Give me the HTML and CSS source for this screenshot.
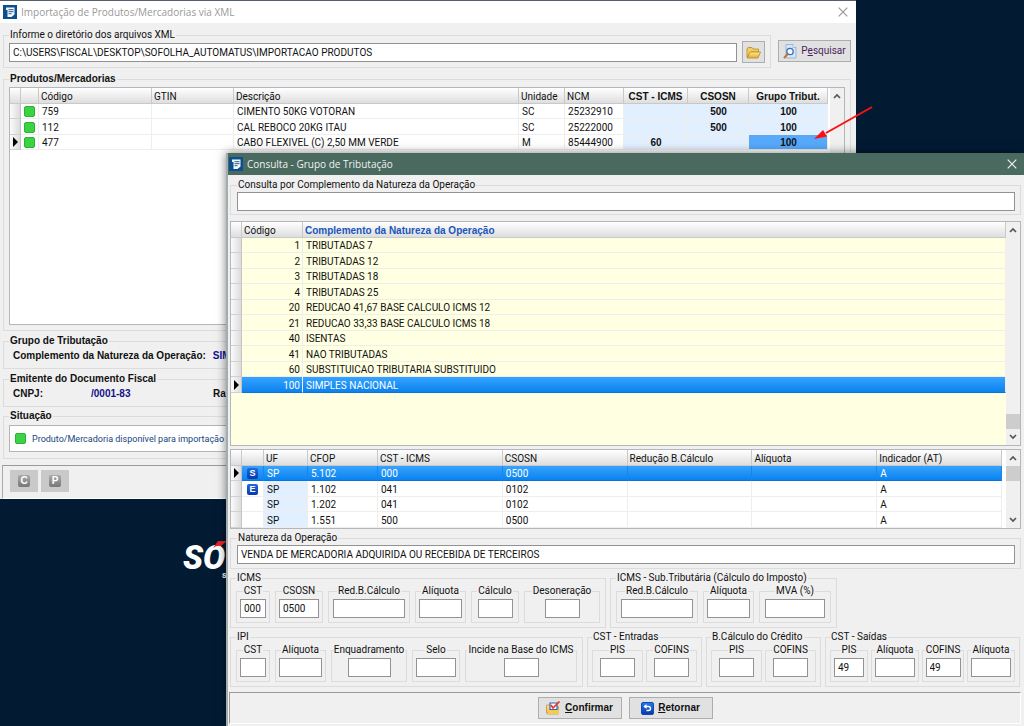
FILE: index.html
```html
<!DOCTYPE html>
<html lang="pt-BR">
<head>
<meta charset="utf-8">
<title>Consulta - Grupo de Tributação</title>
<link rel="stylesheet" href="styles.css">
</head>
<body>
<svg class="defs" width="0" height="0" aria-hidden="true">
  <defs>
    <linearGradient id="blue" x1="0" y1="0" x2="0" y2="1"><stop offset="0" stop-color="#2a7be8"/><stop offset="1" stop-color="#0636a8"/></linearGradient>
    <linearGradient id="gold" x1="0" y1="0" x2="0" y2="1"><stop offset="0" stop-color="#ffe99a"/><stop offset="1" stop-color="#e3a92a"/></linearGradient>
    <symbol id="app" viewBox="0 0 14 14"><rect width="14" height="14" fill="#0b4f8c"/><path d="M3 2.500h8.500v7L8.500 12H4.500V5H3z" fill="#f4f8fb"/><path d="M5.500 4.700h5M5.500 6.700h5M5.500 8.700h3" stroke="#0b4f8c" stroke-width=".9"/></symbol>
    <symbol id="x" viewBox="0 0 10 10"><path d="M.7.7l8.600 8.600M9.300.7L.7 9.300" fill="none" stroke="currentColor" stroke-width="1.200"/></symbol>
    <symbol id="up" viewBox="0 0 8 6"><path d="M1 5l3-3 3 3" fill="none" stroke="#555" stroke-width="1.700"/></symbol>
    <symbol id="down" viewBox="0 0 8 6"><path d="M1 1l3 3 3-3" fill="none" stroke="#555" stroke-width="1.700"/></symbol>
  </defs>
</svg>
<main class="desktop">
  <div class="logo">SO<small>s</small>
    <svg class="accent" width="14" height="7" viewBox="0 0 14 7"><path d="M5 0H14L8 5Q4 4 0 7Z" fill="#e52428"/></svg>
  </div>

  <section class="window import">
    <header class="titlebar">
      <svg class="app" width="14" height="14"><use href="#app"/></svg>
      <h1>Importação de Produtos/Mercadorias via XML</h1>
      <button class="close" aria-label="Fechar"><svg width="10" height="10"><use href="#x"/></svg></button>
    </header>
    <div class="import-body">
      <div class="search-row">
        <fieldset class="group dir">
          <legend><label for="dir">Informe o diretório dos arquivos XML</label></legend>
          <div class="dir-line">
            <input id="dir" class="field" value="C:\USERS\FISCAL\DESKTOP\SOFOLHA_AUTOMATUS\IMPORTACAO PRODUTOS">
            <button class="btn folder" aria-label="Abrir pasta"><svg width="15" height="13" viewBox="0 0 15 13"><path d="M1 11V3l1-1.500h4l1 1.500h5.500V6H5z" fill="#f2cd5d" stroke="#b68a24" stroke-width=".8"/><path d="M1.200 12L4 6h10.500L12 12z" fill="url(#gold)" stroke="#b68a24" stroke-width=".8"/></svg></button>
          </div>
        </fieldset>
        <button class="btn search"><svg width="14" height="15" viewBox="0 0 14 15"><path d="M3 .5h7l3 3V14H3z" fill="#d5e6f7" stroke="#8aaed2" stroke-width=".8"/><path d="M10 .5v3h3" fill="#fff" stroke="#8aaed2" stroke-width=".8"/><circle cx="7" cy="7.500" r="3.200" fill="#eef7ff" stroke="#3c70ae" stroke-width="1.300"/><path d="M4.700 10L1 14" stroke="#c87323" stroke-width="2"/></svg><span>P<u>e</u>squisar</span></button>
      </div>

      <fieldset class="group strong products">
        <legend>Produtos/Mercadorias</legend>
        <div class="grid">
          <div class="sheet">
            <table>
              <colgroup><col class="c-mark"><col class="c-dot"><col class="c-code"><col class="c-gtin"><col><col class="c-unit"><col class="c-ncm"><col class="c-cst"><col class="c-csosn"><col class="c-group"></colgroup>
              <thead><tr><th></th><th></th><th>Código</th><th>GTIN</th><th>Descrição</th><th>Unidade</th><th>NCM</th><th class="key">CST - ICMS</th><th class="key">CSOSN</th><th class="key">Grupo Tribut.</th></tr></thead>
              <tbody>
                <tr><td></td><td><i class="dot"></i></td><td>759</td><td></td><td>CIMENTO 50KG VOTORAN</td><td>SC</td><td>25232910</td><td class="key"></td><td class="key">500</td><td class="key">100</td></tr>
                <tr><td></td><td><i class="dot"></i></td><td>112</td><td></td><td>CAL REBOCO 20KG ITAU</td><td>SC</td><td>25222000</td><td class="key"></td><td class="key">500</td><td class="key">100</td></tr>
                <tr><td><i class="current"></i></td><td><i class="dot"></i></td><td>477</td><td></td><td>CABO FLEXIVEL (C) 2,50 MM VERDE</td><td>M</td><td>85444900</td><td class="key">60</td><td class="key"></td><td class="key active">100</td></tr>
              </tbody>
            </table>
          </div>
          <div class="scroll"><button aria-label="Subir"><svg width="8" height="6"><use href="#up"/></svg></button></div>
        </div>
      </fieldset>

      <fieldset class="group strong info">
        <legend>Grupo de Tributação</legend>
        <p><b>Complemento da Natureza da Operação:</b><b class="value">SIM</b></p>
      </fieldset>
      <fieldset class="group strong info">
        <legend>Emitente do Documento Fiscal</legend>
        <p><b>CNPJ:</b><b class="value cnpj">/0001-83</b><b>Ra</b></p>
      </fieldset>
      <fieldset class="group strong status">
        <legend>Situação</legend>
        <div class="status-box"><i class="dot"></i><span>Produto/Mercadoria disponível para importação</span></div>
      </fieldset>
    </div>
    <footer class="tools">
      <button class="tool" aria-label="C"><span>C</span></button>
      <button class="tool" aria-label="P"><span>P</span></button>
    </footer>
  </section>

  <section class="window lookup">
    <header class="titlebar">
      <svg class="app" width="14" height="14"><use href="#app"/></svg>
      <h2>Consulta - Grupo de Tributação</h2>
      <button class="close" aria-label="Fechar"><svg width="10" height="10"><use href="#x"/></svg></button>
    </header>
    <div class="lookup-body">
      <fieldset class="group query">
        <legend><label for="query">Consulta por Complemento da Natureza da Operação</label></legend>
        <input id="query" class="field wide">
      </fieldset>

      <div class="grid cream">
        <div class="sheet">
          <table>
            <colgroup><col class="c-mark"><col class="c-id"><col></colgroup>
            <thead><tr><th></th><th>Código</th><th class="sorted">Complemento da Natureza da Operação</th></tr></thead>
            <tbody>
              <tr><td></td><td class="num">1</td><td>TRIBUTADAS 7</td></tr>
              <tr><td></td><td class="num">2</td><td>TRIBUTADAS 12</td></tr>
              <tr><td></td><td class="num">3</td><td>TRIBUTADAS 18</td></tr>
              <tr><td></td><td class="num">4</td><td>TRIBUTADAS 25</td></tr>
              <tr><td></td><td class="num">20</td><td>REDUCAO 41,67 BASE CALCULO ICMS 12</td></tr>
              <tr><td></td><td class="num">21</td><td>REDUCAO 33,33 BASE CALCULO ICMS 18</td></tr>
              <tr><td></td><td class="num">40</td><td>ISENTAS</td></tr>
              <tr><td></td><td class="num">41</td><td>NAO TRIBUTADAS</td></tr>
              <tr><td></td><td class="num">60</td><td>SUBSTITUICAO TRIBUTARIA SUBSTITUIDO</td></tr>
              <tr class="selected"><td><i class="current"></i></td><td class="num">100</td><td>SIMPLES NACIONAL</td></tr>
            </tbody>
          </table>
        </div>
        <div class="scroll"><button aria-label="Subir"><svg width="8" height="6"><use href="#up"/></svg></button><i class="thumb low"></i><button aria-label="Descer"><svg width="8" height="6"><use href="#down"/></svg></button></div>
      </div>

      <div class="grid detail">
        <div class="sheet inset">
          <table>
            <colgroup><col class="c-mark"><col class="c-flag"><col class="c-uf"><col class="c-cfop"><col><col><col><col><col></colgroup>
            <thead><tr><th></th><th></th><th>UF</th><th>CFOP</th><th>CST - ICMS</th><th>CSOSN</th><th>Redução B.Cálculo</th><th>Alíquota</th><th>Indicador (AT)</th></tr></thead>
            <tbody>
              <tr class="selected"><td><i class="current"></i></td><td><span class="flag">S</span></td><td class="uf">SP</td><td>5.102</td><td>000</td><td>0500</td><td></td><td></td><td>A</td></tr>
              <tr><td></td><td><span class="flag">E</span></td><td class="uf">SP</td><td>1.102</td><td>041</td><td>0102</td><td></td><td></td><td>A</td></tr>
              <tr><td></td><td></td><td class="uf">SP</td><td>1.202</td><td>041</td><td>0102</td><td></td><td></td><td>A</td></tr>
              <tr><td></td><td></td><td class="uf">SP</td><td>1.551</td><td>500</td><td>0500</td><td></td><td></td><td>A</td></tr>
            </tbody>
          </table>
        </div>
        <div class="scroll"><button aria-label="Subir"><svg width="8" height="6"><use href="#up"/></svg></button><i class="thumb"></i><button aria-label="Descer"><svg width="8" height="6"><use href="#down"/></svg></button></div>
      </div>

      <fieldset class="group nature">
        <legend><label for="nature">Natureza da Operação</label></legend>
        <input id="nature" class="field wide" value="VENDA DE MERCADORIA ADQUIRIDA OU RECEBIDA DE TERCEIROS">
      </fieldset>

      <div class="taxes">
        <fieldset class="group tax">
          <legend>ICMS</legend>
          <div class="boxes">
            <fieldset class="group box g34"><legend><label for="i1">CST</label></legend><input id="i1" class="field f26" value="000"></fieldset>
            <fieldset class="group box g48"><legend><label for="i2">CSOSN</label></legend><input id="i2" class="field f40" value="0500"></fieldset>
            <fieldset class="group box g82"><legend><label for="i3">Red.B.Cálculo</label></legend><input id="i3" class="field f72"></fieldset>
            <fieldset class="group box g51"><legend><label for="i4">Alíquota</label></legend><input id="i4" class="field f42"></fieldset>
            <fieldset class="group box g48"><legend><label for="i5">Cálculo</label></legend><input id="i5" class="field f35"></fieldset>
            <fieldset class="group box g76"><legend><label for="i6">Desoneração</label></legend><input id="i6" class="field f35"></fieldset>
          </div>
        </fieldset>
        <fieldset class="group tax">
          <legend>ICMS - Sub.Tributária (Cálculo do Imposto)</legend>
          <div class="boxes">
            <fieldset class="group box g82"><legend><label for="s1">Red.B.Cálculo</label></legend><input id="s1" class="field f72"></fieldset>
            <fieldset class="group box g51"><legend><label for="s2">Alíquota</label></legend><input id="s2" class="field f42"></fieldset>
            <fieldset class="group box g72"><legend><label for="s3">MVA (%)</label></legend><input id="s3" class="field f60"></fieldset>
          </div>
        </fieldset>
      </div>

      <div class="taxes">
        <fieldset class="group tax">
          <legend>IPI</legend>
          <div class="boxes">
            <fieldset class="group box g34"><legend><label for="p1">CST</label></legend><input id="p1" class="field f26"></fieldset>
            <fieldset class="group box g51"><legend><label for="p2">Alíquota</label></legend><input id="p2" class="field f42"></fieldset>
            <fieldset class="group box g76"><legend><label for="p3">Enquadramento</label></legend><input id="p3" class="field f42"></fieldset>
            <fieldset class="group box g48"><legend><label for="p4">Selo</label></legend><input id="p4" class="field f40"></fieldset>
            <fieldset class="group box g112"><legend><label for="p5">Incide na Base do ICMS</label></legend><input id="p5" class="field f35"></fieldset>
          </div>
        </fieldset>
        <fieldset class="group tax tight">
          <legend>CST - Entradas</legend>
          <div class="boxes">
            <fieldset class="group box g51"><legend><label for="e1">PIS</label></legend><input id="e1" class="field f35"></fieldset>
            <fieldset class="group box g51"><legend><label for="e2">COFINS</label></legend><input id="e2" class="field f35"></fieldset>
          </div>
        </fieldset>
        <fieldset class="group tax tight">
          <legend>B.Cálculo do Crédito</legend>
          <div class="boxes">
            <fieldset class="group box g51"><legend><label for="c1">PIS</label></legend><input id="c1" class="field f35"></fieldset>
            <fieldset class="group box g51"><legend><label for="c2">COFINS</label></legend><input id="c2" class="field f35"></fieldset>
          </div>
        </fieldset>
        <fieldset class="group tax tight">
          <legend>CST - Saídas</legend>
          <div class="boxes">
            <fieldset class="group box g38"><legend><label for="o1">PIS</label></legend><input id="o1" class="field f30" value="49"></fieldset>
            <fieldset class="group box g48"><legend><label for="o2">Alíquota</label></legend><input id="o2" class="field f40"></fieldset>
            <fieldset class="group box g42"><legend><label for="o3">COFINS</label></legend><input id="o3" class="field f35" value="49"></fieldset>
            <fieldset class="group box g48"><legend><label for="o4">Alíquota</label></legend><input id="o4" class="field f40"></fieldset>
          </div>
        </fieldset>
      </div>
    </div>
    <footer class="actions">
      <button class="btn action"><svg width="15" height="14" viewBox="0 0 15 14"><path d="M.5 4h4l1 1.500h7V13H2L.5 12z" fill="url(#gold)" stroke="#c08c1d" stroke-width=".7"/><path d="M4 2h7v6.500H4z" fill="#fff" stroke="#315fc2" stroke-width="1.200"/><path d="M5 4l2 3 6.500-6.500" fill="none" stroke="#e83528" stroke-width="1.700"/><path d="M1 9h12v4H2z" fill="#f3cc55"/></svg><span><u>C</u>onfirmar</span></button>
      <button class="btn action"><svg width="13" height="13" viewBox="0 0 13 13"><rect x=".5" y=".5" width="12" height="12" rx="1.500" fill="url(#blue)" stroke="#0b4cb8"/><path d="M3 4.500h4.500q2 0 2 2t-2 2H5.500" fill="none" stroke="#fff" stroke-width="1.400"/><path d="M2.500 4.500L5.500 2v5z" fill="#fff"/></svg><span><u>R</u>etornar</span></button>
    </footer>
  </section>

  <svg class="arrow" width="60" height="36" viewBox="0 0 60 36"><path d="M58 2L12 28" stroke="#ff1010" stroke-width="2"/><path d="M0 34L9 25 13 31.500Z" fill="#ff1010"/></svg>
</main>
</body>
</html>
```

FILE: styles.css
```css
* { box-sizing: border-box; }

body {
  margin: 0;
  font-family: Roboto, sans-serif;
  font-size: 10px;
  line-height: 12px;
  color: #111;
}

button, input { font: inherit; color: inherit; }
svg { display: block; flex: none; }
.defs { position: absolute; }

.desktop {
  position: relative;
  height: 100vh;
  overflow: hidden;
  background: #021b33;
}

/* Desktop logo */
.logo {
  position: absolute;
  left: 183px;
  top: 541px;
  font: italic 900 33px/33px Roboto, sans-serif;
  color: #fff;
}
.logo small {
  display: block;
  margin: -4px 0 0 39px;
  font: 700 9px/10px Roboto, sans-serif;
}
.accent { position: absolute; left: 30px; top: 0; }

/* Windows */
.window {
  position: absolute;
  display: flex;
  flex-direction: column;
  background: #f0f0f0;
}
.import { left: 0; right: 168px; top: 0; border-top: 1px solid #555f70; }
.lookup {
  left: 226px;
  right: 0;
  top: 153px;
  bottom: 0;
  border-left: 2px solid #a3adad;
  box-shadow: 0 0 9px rgba(0, 0, 0, .5);
}

.titlebar {
  display: flex;
  align-items: center;
  gap: 4px;
  height: 22px;
  padding: 0 8px 0 3px;
  background: #fff;
  color: #999;
  font-family: "Open Sans", sans-serif;
}
.titlebar h1, .titlebar h2 {
  flex: 1;
  margin: 0;
  font-size: 10px;
  line-height: 14px;
  font-weight: 400;
}
.lookup .titlebar { padding: 0 7px 0 1px; background: #4a695f; color: #eef3f1; }
.close { display: flex; padding: 0; border: 0; background: none; }

/* Framed groups */
.group {
  min-width: 0;
  margin: 0;
  padding: 0 5px 4px;
  border: 1px solid #dcdcdc;
}
.group > legend {
  padding: 0 1px;
  line-height: 12px;
  white-space: nowrap;
}
.strong > legend, .info { font: 700 10px/12px "Liberation Sans", sans-serif; }

.field {
  display: block;
  height: 19px;
  padding: 0 3px;
  border: 1px solid #929292;
  border-radius: 0;
  background: #fff;
  line-height: 16px;
}
.wide { width: 100%; }

.btn {
  display: flex;
  align-items: center;
  justify-content: center;
  gap: 4px;
  height: 22px;
  padding: 0;
  border: 1px solid #adadad;
  background: #e1e1e1;
}

/* Data grids */
.grid {
  display: flex;
  border: 1px solid #b4b6be;
  background: #fff;
}
.sheet { flex: 1; min-width: 0; }
.products .sheet { margin-right: 2px; }
.inset { margin-right: 4px; }
.grid table { width: 100%; table-layout: fixed; border-spacing: 0; }
.grid th, .grid td {
  height: 15px;
  padding: 1px 2px 0;
  border-right: 1px solid #eee;
  border-bottom: 1px solid #eee;
  overflow: hidden;
  line-height: 13px;
  text-align: left;
  white-space: nowrap;
}
.grid tr:nth-child(even) td { height: 16px; }
.grid th {
  height: 16px;
  border-right-color: #c9c9c9;
  border-bottom-color: #c9c9c9;
  background: linear-gradient(#fff, #dedede);
  font-weight: 400;
}
.grid td { padding-left: 3px; }
.grid td:first-child {
  padding: 0 0 0 2px;
  border-right-color: #c4c4c4;
  border-bottom-color: #d0d0d0;
  background: linear-gradient(90deg, #fbfbfb, #dcdcdc);
}
.grid .key {
  font: 700 10px/13px "Liberation Sans", sans-serif;
  text-align: center;
}
.grid td.key { background: #e1efff; }
.grid td.active { background: #56a9fb; }
.grid th.sorted { font: 700 10px/13px "Liberation Sans", sans-serif; color: #1a56bd; }
.grid .num { padding-right: 2px; text-align: right; }
.uf { background: #e1efff; }
.cream, .cream td { background: #ffffe1; }
.grid .selected td:not(:first-child) {
  border-bottom-color: #0a74dd;
  background: linear-gradient(#36a3ff, #0a82ee);
  color: #fff;
}
.detail .selected td:not(:first-child) { border-right-color: #1487ef; }

.c-mark { width: 11px; }
.c-dot { width: 18px; }
.c-code { width: 113px; }
.c-gtin { width: 82px; }
.c-unit { width: 46px; }
.c-ncm { width: 59px; }
.c-cst { width: 64px; }
.c-csosn { width: 61px; }
.c-group { width: 79px; }
.c-id { width: 61px; }
.c-flag { width: 22px; }
.c-uf { width: 44px; }
.c-cfop { width: 70px; }

.dot {
  display: block;
  flex: none;
  width: 11px;
  height: 11px;
  border: 1px solid #2fb036;
  border-radius: 2px;
  background: #3bd344;
}
.current {
  display: block;
  width: 0;
  border: solid transparent;
  border-width: 5px 0 5px 5px;
  border-left-color: #000;
  margin-left: 1px;
}
.flag {
  display: block;
  width: 11px;
  height: 11px;
  margin-left: 2px;
  border-radius: 2px;
  background: linear-gradient(#2468dc, #0638a8);
  color: #fff;
  font: 700 9px/11px "Liberation Sans", sans-serif;
  text-align: center;
}

.scroll {
  display: flex;
  flex-direction: column;
  width: 14px;
  background: #f0f0f0;
}
.scroll button {
  display: grid;
  place-items: center;
  height: 16px;
  padding: 0;
  border: 0;
  background: none;
}
.scroll button:last-child:not(:first-child) { margin-top: auto; }
.thumb { height: 15px; background: #cdcdcd; }
.low { margin-top: auto; }
.scroll .low + button:last-child:not(:first-child) { margin-top: 0; }

/* Import window */
.import-body {
  display: flex;
  flex-direction: column;
  padding: 6px 5px 6px 3px;
}
.search-row { display: flex; align-items: flex-start; gap: 7px; }
.dir { flex: 1; }
.dir-line { display: flex; align-items: center; gap: 5px; }
.dir-line .field { flex: 1; min-width: 0; }
.folder { width: 23px; }
.search { width: 73px; margin-top: 11px; color: #4c1f5c; }
.products { margin-top: 5px; padding-top: 2px; padding-bottom: 5px; }
.products .grid { height: 238px; }
.info { margin-top: 4px; padding-bottom: 3px; }
.info p { display: flex; gap: 7px; margin: 0; padding: 3px 4px; line-height: 12px; white-space: nowrap; }
.value { color: #10108c; }
.cnpj { width: 115px; margin-left: 41px; }
.status { margin-top: 3px; padding-top: 3px; padding-bottom: 6px; }
.status-box {
  display: flex;
  align-items: center;
  gap: 6px;
  height: 27px;
  padding-left: 5px;
  border: 1px solid #b4b4b4;
  background: #fff;
  color: #17457f;
  font: 9px/12px Roboto, sans-serif;
  white-space: nowrap;
}
.tools {
  display: flex;
  gap: 3px;
  margin-left: 2px;
  padding: 4px 7px 6px;
  border-top: 1px solid #999;
  border-left: 1px solid #aaa;
  border-bottom: 1px solid #fff;
}
.tool {
  display: grid;
  place-items: center;
  width: 28px;
  height: 22px;
  padding: 0;
  border: 0;
  background: #c9c9c9;
}
.tool span {
  width: 12px;
  height: 12px;
  border-radius: 2px;
  background: linear-gradient(#aaa, #777);
  color: #fff;
  font: 700 10px/12px "Liberation Sans", sans-serif;
}

/* Lookup window */
.lookup-body {
  flex: 1;
  display: flex;
  flex-direction: column;
  gap: 3px;
  min-height: 0;
  padding: 4px 3px 5px 2px;
}
.query { margin-bottom: 3px; padding-top: 1px; padding-bottom: 3px; }
.cream { flex: 1; min-height: 0; }
.query, .nature { padding-left: 6px; }
.nature { padding-top: 1px; }
.taxes { display: flex; gap: 4px; }
.tax { padding-top: 1px; }
.boxes { display: flex; gap: 5px; }
.tight { padding-right: 4px; padding-left: 4px; }
.tight .boxes { gap: 3px; }
.box { padding: 2px 0 4px; }
.box > legend { margin: 0 auto; }
.box .field { margin: 0 auto; }

.g34 { width: 34px; }
.g38 { width: 38px; }
.g42 { width: 42px; }
.g48 { width: 48px; }
.g51 { width: 51px; }
.g72 { width: 72px; }
.g76 { width: 76px; }
.g82 { width: 82px; }
.g112 { width: 112px; }
.f26 { width: 26px; }
.f30 { width: 30px; }
.f35 { width: 35px; }
.f40 { width: 40px; }
.f42 { width: 43px; }
.f60 { width: 60px; }
.f72 { width: 72px; }

.actions {
  display: flex;
  justify-content: center;
  gap: 7px;
  margin: 0 3px 2px 1px;
  padding: 4px 0 4px;
  border: 1px solid #999;
  border-right-color: #fff;
  border-bottom-color: #fff;
}
.action { width: 84px; font: 700 10px/12px "Liberation Sans", sans-serif; }

.arrow { position: absolute; left: 814px; top: 105px; pointer-events: none; }
```
